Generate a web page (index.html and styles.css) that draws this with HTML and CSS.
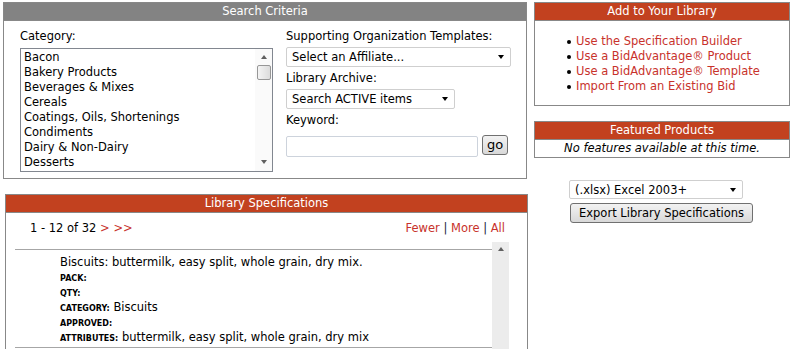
FILE: index.html
```html
<!DOCTYPE html>
<html lang="en">
<head>
    <meta charset="UTF-8">
    <title>Library</title>
    <link rel="stylesheet" href="styles.css">
</head>
<body>
    <div class="strona">
        <div class="kolumna-lewa">
            <div class="panel szukaj">
                <div class="naglowek szary">Search Criteria</div>
                <div class="szukaj-tresc">
                    <div class="kategoria">
                        <div class="etykieta">Category:</div>
                        <div class="lista">
                            <ul class="opcje">
                                <li>Bacon</li>
                                <li>Bakery Products</li>
                                <li>Beverages &amp; Mixes</li>
                                <li>Cereals</li>
                                <li>Coatings, Oils, Shortenings</li>
                                <li>Condiments</li>
                                <li>Dairy &amp; Non-Dairy</li>
                                <li>Desserts</li>
                            </ul>
                            <div class="pasek">
                                <span class="strzalka gora"></span>
                                <span class="suwak"></span>
                                <span class="tor"></span>
                                <span class="strzalka dol"></span>
                            </div>
                        </div>
                    </div>
                    <div class="pola">
                        <div class="etykieta">Supporting Organization Templates:</div>
                        <div class="wybor szeroki">
                            <select><option>Select an Affiliate...</option></select>
                        </div>
                        <div class="etykieta">Library Archive:</div>
                        <div class="wybor sredni">
                            <select><option>Search ACTIVE items</option></select>
                        </div>
                        <div class="etykieta">Keyword:</div>
                        <div class="szukaj-wiersz">
                            <input type="text" class="slowo">
                            <button class="przycisk go">go</button>
                        </div>
                    </div>
                </div>
            </div>

            <div class="panel specyfikacje">
                <div class="naglowek czerwony">Library Specifications</div>
                <div class="stronicowanie">
                    <div>1 - 12 of 32 <a href="#">&gt;</a> <a href="#">&gt;&gt;</a></div>
                    <div><a href="#">Fewer</a> <span class="kreska">|</span> <a href="#">More</a> <span class="kreska">|</span> <a href="#">All</a></div>
                </div>
                <div class="okno">
                    <div class="pozycje">
                        <div class="pozycja">
                            <div>Biscuits: buttermilk, easy split, whole grain, dry mix.</div>
                            <div><span class="pole">PACK:</span></div>
                            <div><span class="pole">QTY:</span></div>
                            <div><span class="pole">CATEGORY:</span> Biscuits</div>
                            <div><span class="pole">APPROVED:</span></div>
                            <div><span class="pole">ATTRIBUTES:</span> buttermilk, easy split, whole grain, dry mix</div>
                        </div>
                    </div>
                    <div class="pasek jasny">
                        <span class="strzalka gora"></span>
                    </div>
                </div>
            </div>
        </div>

        <div class="kolumna-prawa">
            <div class="panel">
                <div class="naglowek czerwony">Add to Your Library</div>
                <ul class="dodaj">
                    <li><a href="#">Use the Specification Builder</a></li>
                    <li><a href="#">Use a BidAdvantage® Product</a></li>
                    <li><a href="#">Use a BidAdvantage® Template</a></li>
                    <li><a href="#">Import From an Existing Bid</a></li>
                </ul>
            </div>
            <div class="panel polecane">
                <div class="naglowek czerwony">Featured Products</div>
                <div class="brak">No features available at this time.</div>
            </div>
            <div class="eksport">
                <div class="wybor format">
                    <select><option>(.xlsx) Excel 2003+</option></select>
                </div>
                <button class="przycisk eksportuj">Export Library Specifications</button>
            </div>
        </div>
    </div>
</body>
</html>
```

FILE: styles.css
```css
*{box-sizing: border-box;}
body{
    margin: 0;
    padding: 2px 0 0 3px;
    font-family: "DejaVu Sans", Verdana, sans-serif;
    font-size: 11.5px;
    color: #000;
    background-color: #fff;
}
a{
    color: #c8322c;
    text-decoration: none;
}
ul{
    list-style: none;
    margin: 0;
    padding: 0;
}

.strona{
    display: flex;
    gap: 6px;
}
.kolumna-lewa{
    width: 525px;
    display: flex;
    flex-direction: column;
}
.kolumna-prawa{
    width: 256px;
    display: flex;
    flex-direction: column;
}

.panel{
    border: 1px solid #888;
    background-color: #fff;
}
.naglowek{
    height: 18px;
    line-height: 17px;
    text-align: center;
    color: #fff;
    border-bottom: 1px solid #888;
}
.szary{background-color: #838383;}
.czerwony{background-color: #c2411f;}

/* search criteria */
.szukaj{
    width: 524px;
}
.szukaj-tresc{
    display: flex;
    gap: 13px;
    padding: 8px 16px 6px 16px;
}
.etykieta{
    line-height: 15px;
    margin-bottom: 4px;
}
.lista{
    display: flex;
    width: 253px;
    height: 124px;
    border: 1px solid #828790;
    overflow: hidden;
}
.opcje{
    flex: 1;
    padding: 1px 0 0 3px;
    line-height: 15px;
}
.pasek{
    width: 17px;
    display: flex;
    flex-direction: column;
    align-items: center;
    background-color: #fafafa;
}
.strzalka{
    width: 0;
    height: 0;
    border-left: 3.5px solid transparent;
    border-right: 3.5px solid transparent;
}
.gora{
    border-bottom: 4px solid #606060;
    margin-top: 6px;
}
.dol{
    border-top: 4px solid #606060;
    margin-bottom: 7px;
}
.suwak{
    width: 14px;
    height: 15px;
    margin-top: 6px;
    border: 1px solid #979797;
    border-radius: 2px;
    background: linear-gradient(to right, #f4f4f4, #dcdcdc);
}
.tor{flex: 1;}

.pola{
    width: 224px;
}
.pola .etykieta{margin-bottom: 3px;}
.wybor{
    position: relative;
    margin-bottom: 4px;
}
.wybor select{
    appearance: none;
    -webkit-appearance: none;
    width: 100%;
    height: 20px;
    font: inherit;
    color: #000;
    padding: 0 0 0 5px;
    border: 1px solid #cfcfcf;
    border-radius: 2px;
    background-color: #fff;
    outline: none;
}
.wybor::after{
    content: "";
    position: absolute;
    right: 7px;
    top: 8px;
    border-left: 3.5px solid transparent;
    border-right: 3.5px solid transparent;
    border-top: 4px solid #000;
}
.szeroki{width: 225px;}
.sredni{width: 169px;}
.szukaj-wiersz{
    display: flex;
    align-items: flex-start;
    gap: 4px;
    margin-top: 7px;
}
.slowo{
    width: 192px;
    height: 21px;
    margin-top: 1px;
    border: 1px solid #cdd3dc;
    border-radius: 2px;
    outline: none;
}
.przycisk{
    font: inherit;
    color: #000;
    padding: 0;
    border: 1px solid #707070;
    border-radius: 3px;
    background: linear-gradient(#f2f2f2, #e6e6e6 50%, #d8d8d8);
}
.go{
    width: 26px;
    height: 20px;
    font-size: 13px;
    line-height: 16px;
}

/* library specifications */
.specyfikacje{
    width: 523px;
    margin: 15px 0 0 2px;
}
.stronicowanie{
    display: flex;
    justify-content: space-between;
    line-height: 15px;
    padding: 8px 22px 0 24px;
}
.kreska{color: #1a1a40;}
.okno{
    display: flex;
    margin: 6px 18px 0 9px;
    height: 110px;
    overflow: hidden;
}
.pozycje{
    flex: 1;
    padding-top: 7px;
}
.pozycja{
    line-height: 15px;
    padding: 5px 0 2px 45px;
    border-top: 1px solid #a6a6a6;
    border-bottom: 1px solid #a6a6a6;
}
.pozycja div{height: 15px;}
.pole{
    font-size: 8px;
    font-weight: bold;
    line-height: 1;
}
.jasny{
    background-color: #ececec;
}
.jasny .gora{margin-top: 5px;}

/* right column */
.dodaj{
    line-height: 15px;
    padding: 13px 0 11px 32px;
}
.dodaj li{
    display: flex;
    align-items: center;
    gap: 5px;
}
.dodaj li::before{
    content: "";
    width: 4px;
    height: 4px;
    border-radius: 50%;
    background-color: #000;
}
.polecane{
    margin-top: 15px;
}
.brak{
    font-style: italic;
    text-align: center;
    line-height: 15px;
    padding: 1px 0;
}
.eksport{
    padding: 22px 0 0 35px;
}
.format{
    width: 174px;
}
.format select{height: 19px;}
.format::after{top: 8px;}
.eksportuj{
    width: 183px;
    height: 20px;
    margin-left: 1px;
}
```
